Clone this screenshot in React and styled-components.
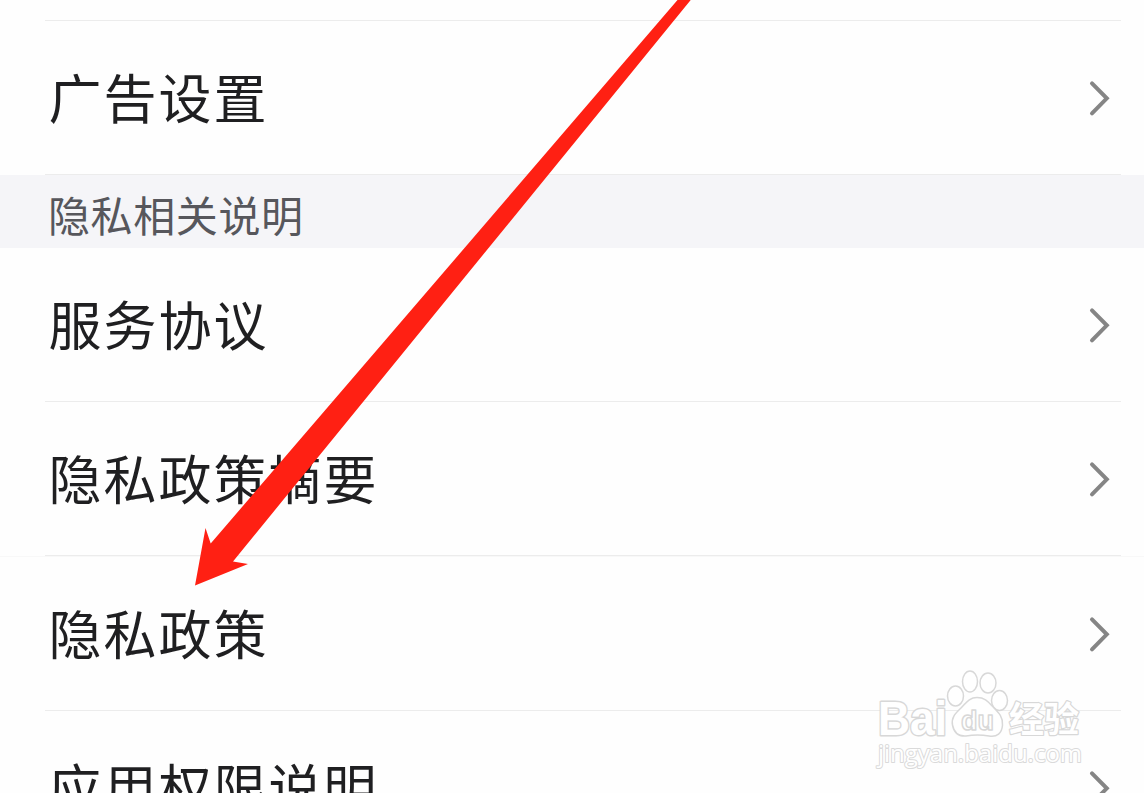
import React from "react";
import styled, { createGlobalStyle } from "styled-components";

const GlobalStyle = createGlobalStyle`
body {
  margin: 0;
  background-color: #fefefe;
}
`
const Page = styled.main`
position: relative;
box-sizing: border-box;
height: 793px;
padding-top: 20px;
overflow: hidden;
background-color: #fefefe;
font-family: "Noto Sans CJK SC", "Noto Sans", sans-serif;
`
const Divider = styled.hr`
height: 1px;
margin: 0 23px 0 45px;
border: none;
background-color: #ececec;
`
const Row = styled.div`
box-sizing: border-box;
height: ${(props) => props.$height || 153}px;
padding: 0 34px 0 48.5px;
border-top: ${(props) => (props.$ruled ? "1px solid #f8f8f8" : "none")};
display: flex;
align-items: center;
justify-content: space-between;
`
const Label = styled.span`
padding-bottom: 4px;
color: #1f1f21;
font-size: 53px;
line-height: 76px;
letter-spacing: 2px;
`
const SectionTitle = styled.h2`
margin: 0;
padding-left: 48px;
height: 73px;
background-color: #f5f5f8;
color: #57575c;
font-size: 42px;
font-weight: 400;
line-height: 78px;
letter-spacing: 0.6px;
`
const ChevronIcon = styled.svg`
width: 22px;
height: 38px;
flex: none;
`
const ArrowOverlay = styled.svg`
position: absolute;
top: 0;
left: 0;
`
const Watermark = styled.svg`
position: absolute;
left: 870px;
top: 662px;
`
const WatermarkText = styled.text`
font-family: "Liberation Sans", "Noto Sans CJK SC", sans-serif;
font-weight: 700;
font-size: ${(props) => props.$size}px;
stroke-width: ${(props) => props.$outline || 1.5}px;
paint-order: ${(props) => (props.$outline ? "stroke" : "normal")};
`
const WatermarkUrl = styled.text`
font-family: "Open Sans", sans-serif;
font-size: 24px;
stroke: #dadada;
stroke-width: 2px;
paint-order: stroke;
`

const Chevron = () => (
  <ChevronIcon viewBox="0 0 22 38" fill="none" stroke="#858585" strokeWidth="4">
    <path d="M4 4.3 L18.8 19.3 L4 34.3" strokeLinecap="round" />
  </ChevronIcon>
)

const Item = ({ label, height, ruled }) => (
  <Row $height={height} $ruled={ruled}>
    <Label>{label}</Label>
    <Chevron />
  </Row>
)

const App = () => {
    return (
        <>
          <GlobalStyle />
          <Page>
            <Divider />
            <Item label="广告设置" />
            <Divider />
            <SectionTitle>隐私相关说明</SectionTitle>
            <Item label="服务协议" />
            <Divider />
            <Item label="隐私政策摘要" />
            <Divider />
            <Item label="隐私政策" height={154} ruled />
            <Divider />
            <Item label="应用权限说明" />
            <ArrowOverlay width="1144" height="793" viewBox="0 0 1144 793">
              <polygon
                fill="#ff2013"
                points="195,585.5 205.5,528 210.7,543.5 677.5,0 690.7,0 233,561.5 248,564"
              />
            </ArrowOverlay>
            <Watermark width="220" height="116" fill="#fff" stroke="#d8d8d8" strokeWidth="1.5" strokeLinejoin="round">
              <WatermarkText $size={48} $outline={3} x="8" y="73" textLength="69" lengthAdjust="spacingAndGlyphs">Bai</WatermarkText>
              <WatermarkText $size={35} $outline={2.4} x="139" y="69.5" textLength="70">经验</WatermarkText>
              <ellipse cx="85.5" cy="34" rx="8" ry="10" />
              <ellipse cx="100" cy="19.5" rx="7.5" ry="10.5" />
              <ellipse cx="118" cy="21" rx="8" ry="10" />
              <ellipse cx="129.5" cy="38.5" rx="8" ry="10" />
              <path d="M107 35.5 C99 35.5 96 41 91 46 C86 51 81 55 82.5 63 C84 71 89 74.5 96 74 C104 72.5 111 72.5 119 74 C127 75.5 132 71 132.5 63 C133 55 129 51 124 46 C119 41 116 35.5 107 35.5 Z" />
              <WatermarkText $size={28} x="91" y="67.5" textLength="33" lengthAdjust="spacingAndGlyphs">du</WatermarkText>
              <WatermarkUrl x="8" y="99.5" textLength="204" lengthAdjust="spacingAndGlyphs">jingyan.baidu.com</WatermarkUrl>
            </Watermark>
          </Page>
        </>
     );
}

export default App;
